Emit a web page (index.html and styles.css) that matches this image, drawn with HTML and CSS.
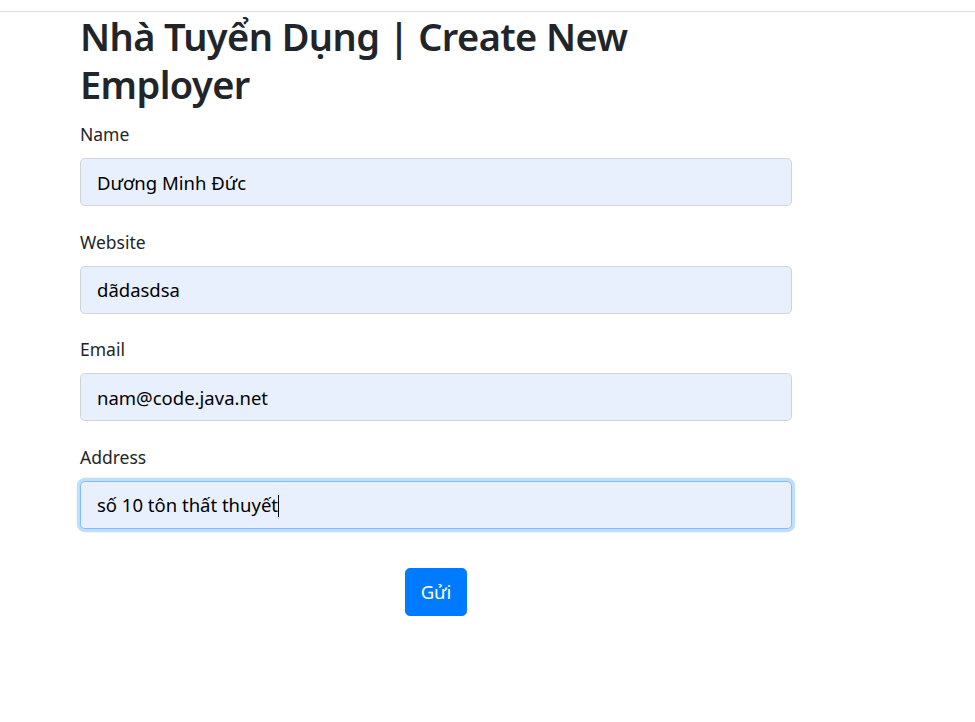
FILE: index.html
```html
<!DOCTYPE html>
<html lang="vi">
<head>
<meta charset="utf-8">
<title>Create New Employer</title>
<link rel="stylesheet" href="styles.css">
</head>
<body>
<div class="topbar"></div>
<main class="container">
  <h1 class="title">Nhà Tuyển Dụng | Create New Employer</h1>
  <form class="form">
    <div class="form-group">
      <label class="label" for="name">Name</label>
      <input class="form-control" id="name" type="text" value="Dương Minh Đức">
    </div>
    <div class="form-group">
      <label class="label" for="website">Website</label>
      <input class="form-control" id="website" type="text" value="dãdasdsa">
    </div>
    <div class="form-group">
      <label class="label" for="email">Email</label>
      <input class="form-control" id="email" type="text" value="nam@code.java.net">
    </div>
    <div class="form-group">
      <label class="label">Address</label>
      <div class="form-control focused">số 10 tôn thất thuyết<span class="caret"></span></div>
    </div>
    <div class="actions">
      <button class="btn" type="button">Gửi</button>
    </div>
  </form>
</main>
</body>
</html>
```
FILE: styles.css
```css
html, body {
  margin: 0;
  padding: 0;
  background: #fff;
}
body {
  font-family: "Noto Sans", "Open Sans", "DejaVu Sans", sans-serif;
  color: #212529;
}
.topbar {
  height: 11px;
  border-bottom: 1px solid #dcdcdc;
}
.container {
  width: 712px;
  padding-left: 80px;
}
.title {
  width: 600px;
  margin: 0 0 14px;
  font-size: 38px;
  line-height: 48px;
  font-weight: 600;
  letter-spacing: -0.6px;
}
.form-group {
  margin-bottom: 23.7px;
}
.label {
  display: block;
  font-size: 17.5px;
  line-height: 24px;
  margin-bottom: 12px;
}
.form-control {
  display: block;
  box-sizing: border-box;
  width: 100%;
  height: 48px;
  padding: 8px 16px;
  font-family: inherit;
  font-size: 18.5px;
  line-height: 30px;
  color: #000;
  background: #e8f0fe;
  border: 1px solid #ced4da;
  border-radius: 4.8px;
  outline: none;
}
.focused {
  border-color: #80bdff;
  box-shadow: 0 0 0 3.2px rgba(0, 123, 255, 0.25);
}
.caret {
  display: inline-block;
  width: 1px;
  height: 22px;
  background: #000;
  vertical-align: -5px;
}
.actions {
  display: flex;
  justify-content: center;
  padding-top: 15px;
}
.btn {
  height: 48px;
  padding: 0 15px;
  font-family: inherit;
  font-size: 18.5px;
  color: #fff;
  background: #007bff;
  border: 1px solid #007bff;
  border-radius: 4.8px;
}
```
